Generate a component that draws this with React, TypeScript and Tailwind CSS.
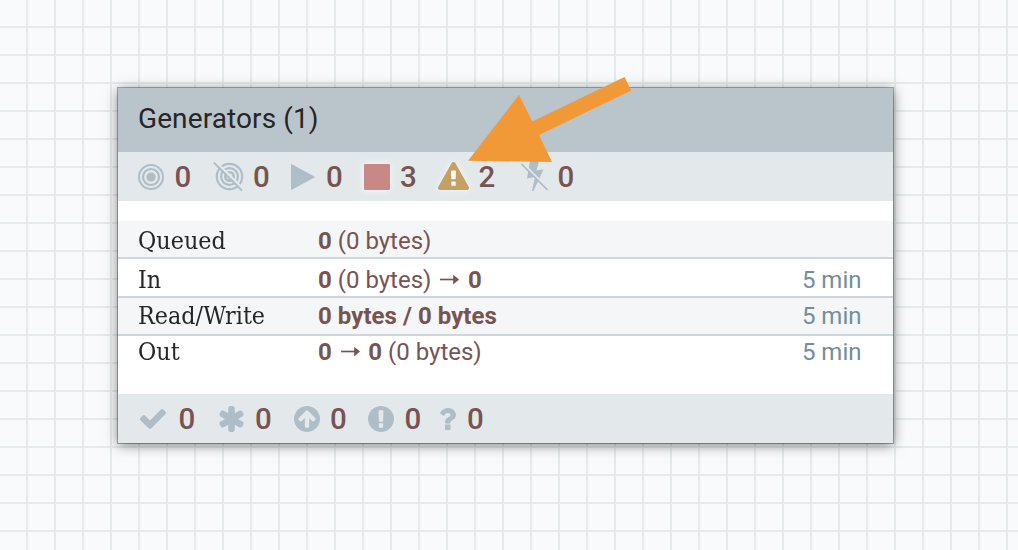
import React from "react";

const CHECK =
  "M1671 566q0 40-28 68l-724 724-136 136q-28 28-68 28t-68-28l-136-136-362-362q-28-28-28-68t28-68l136-136q28-28 68-28t68 28l294 295 656-657q28-28 68-28t68 28l136 136q28 28 28 68z";
const ASTERISK =
  "M1546 1050q46 26 59.5 77.5t-12.5 97.5l-64 110q-26 46-77.5 59.5t-97.5-12.5l-266-153v307q0 52-38 90t-90 38h-128q-52 0-90-38t-38-90v-307l-266 153q-46 26-97.5 12.5t-77.5-59.5l-64-110q-26-46-12.5-97.5t59.5-77.5l266-154-266-154q-46-26-59.5-77.5t12.5-97.5l64-110q26-46 77.5-59.5t97.5 12.5l266 153v-307q0-52 38-90t90-38h128q52 0 90 38t38 90v307l266-153q46-26 97.5-12.5t77.5 59.5l64 110q26 46 12.5 97.5t-59.5 77.5l-266 154z";
const ARROW_UP =
  "M1412 895q0-27-18-45l-362-362-91-91q-18-18-45-18t-45 18l-91 91-362 362q-18 18-18 45t18 45l91 91q18 18 45 18t45-18l189-189v502q0 26 19 45t45 19h128q26 0 45-19t19-45v-502l189 189q19 19 45 19t45-19l91-91q18-18 18-45zm252 1q0 209-103 385.5t-279.5 279.5-385.5 103-385.5-103-279.5-279.5-103-385.5 103-385.5 279.5-279.5 385.5-103 385.5 103 279.5 279.5 103 385.5z";
const EXCLAMATION =
  "M896 128q209 0 385.5 103t279.5 279.5 103 385.5-103 385.5-279.5 279.5-385.5 103-385.5-103-279.5-279.5-103-385.5 103-385.5 279.5-279.5 385.5-103zm128 1247v-190q0-14-9-23.5t-22-9.5h-192q-13 0-23 10t-10 23v190q0 13 10 23t23 10h192q13 0 22-9.5t9-23.5zm-2-344l18-621q0-12-10-18-10-8-24-8h-220q-14 0-24 8-10 6-10 18l17 621q0 10 10 17.5t24 7.5h185q14 0 23.5-7.5t10.5-17.5z";
const QUESTION =
  "M1088 1256v240q0 16-12 28t-28 12h-240q-16 0-28-12t-12-28v-240q0-16 12-28t28-12h240q16 0 28 12t12 28zm316-600q0 54-15.5 101t-35 76.5-55 59.5-57.5 43.5-61 35.5q-41 23-68.5 65t-27.5 67q0 17-12 32.5t-28 15.5h-240q-15 0-25.5-18.5t-10.5-37.5v-45q0-83 65-156.5t143-108.5q59-27 84-56t25-76q0-42-46.5-74t-107.5-32q-65 0-108 29-35 25-107 115-13 16-31 16-12 0-25-8l-164-125q-13-10-15.5-25t5.5-28q160-266 464-266 80 0 161 31t146 83 106 127.5 41 158.5z";
const WARNING =
  "M1024 1375v-190q0-14-9.5-23.5t-22.5-9.5h-192q-13 0-22.5 9.5t-9.5 23.5v190q0 14 9.5 23.5t22.5 9.5h192q13 0 22.5-9.5t9.5-23.5zm-2-374l17-459q0-12-10-19-13-11-24-11h-220q-11 0-24 11-10 7-10 21l16 457q0 10 10 16.5t24 6.5h185q14 0 23.5-6.5t10.5-16.5zm-14-934l768 1408q35 63-2 126-17 29-46.5 46t-63.5 17h-1536q-34 0-63.5-17t-46.5-46q-37-63-2-126l768-1408q17-31 47-49t65-18 65 18 47 49z";

function Stat({ className, icon, value }: { className: string; icon: React.ReactNode; value: number }) {
  return (
    <div className={`grid shrink-0 items-center ${className}`}>
      <span className="flex items-center">{icon}</span>
      <span className="pt-[2px] text-[29.5px] leading-none font-medium text-[#775351]">{value}</span>
    </div>
  );
}

function Target() {
  return (
    <svg className="h-[26px] w-[26px]" viewBox="0 0 26 26" fill="none" stroke="#aebdc6">
      <circle cx="13" cy="13" r="12" strokeWidth="2" />
      <circle cx="13" cy="13" r="8" strokeWidth="2.2" />
      <circle cx="13" cy="13" r="4.6" fill="#aebdc6" stroke="none" />
    </svg>
  );
}

function TargetOff() {
  return (
    <svg className="h-[30px] w-[31px]" viewBox="0 0 31 30" fill="none" stroke="#aebdc6">
      <circle cx="16.5" cy="14.5" r="12.7" strokeWidth="2.2" />
      <circle cx="16.5" cy="14.5" r="8.4" strokeWidth="2.2" />
      <circle cx="16.5" cy="14.5" r="4.2" strokeWidth="2.6" />
      <path d="M2.5 -0.8 L31 27.7" stroke="#e3e8eb" strokeWidth="2" />
      <path d="M0.8 0.6 L29 28.6" strokeWidth="2" />
    </svg>
  );
}

function BoltOff() {
  return (
    <svg className="h-[32px] w-[28px]" viewBox="0 0 28 32">
      <path d="M9 0 H18 L15.5 9.5 L22.5 8.2 L12.5 30 L11 30 L14 16 L6 17.4 Z" fill="#aebdc6" />
      <path d="M1.8 2.2 L28 28.4" stroke="#e3e8eb" strokeWidth="2" />
      <path d="M0.5 3 L26.5 29" stroke="#aebdc6" strokeWidth="1.7" />
    </svg>
  );
}

function Arrow() {
  return (
    <svg className="mr-2 ml-[9px] inline-block h-[11px] w-[19.5px] align-[3px]" viewBox="0 0 20 11">
      <path d="M0 5.5H15" stroke="#775351" strokeWidth="1.7" />
      <path d="M13.5 0.5L19.6 5.5L13.5 10.5Z" fill="#775351" />
    </svg>
  );
}

function Row({ className, label, time, children }: { className: string; label: React.ReactNode; time?: string; children: React.ReactNode }) {
  return (
    <div className={`flex shrink-0 pl-5 pr-[31px] text-2xl leading-7 ${className}`}>
      <div className="w-[180px]">
        <span className="inline-block origin-left scale-x-[0.93] font-['Roboto_Slab','DejaVu_Serif',serif] text-2xl leading-7 text-[#262626]">{label}</span>
      </div>
      <div className="grow whitespace-nowrap text-[#775351]">{children}</div>
      <div className="text-[#728e9b]">{time}</div>
    </div>
  );
}

export default function App() {
  return (
    <div className="relative h-[550px] w-[1018px] overflow-hidden bg-[#f9fafc] bg-[linear-gradient(to_right,transparent_26px,#e5ebeb_26px),linear-gradient(to_bottom,transparent_26px,#e5ebeb_26px)] bg-[size:28px_28px] pt-[88px] pl-[118px] font-[Roboto,sans-serif]">
      <div className="flex h-[355px] w-[774.5px] flex-col bg-white shadow-[0_0_0_1px_rgba(0,0,0,0.3),0_2px_12px_rgba(0,0,0,0.5)]">
        <div className="flex h-16 shrink-0 items-center bg-[#bac5cb] pl-5 text-[28px] leading-none text-[#262626]">
          <span className="-translate-y-px tracking-[0.1px]">Generators (1)</span>
        </div>
        <div className="flex h-[49px] shrink-0 items-center bg-[#e3e8eb] pl-5">
          <Stat className="w-[75px] grid-cols-[36.5px_1fr]" value={0} icon={<Target />} />
          <Stat className="w-[78px] grid-cols-[40px_1fr]" value={0} icon={<TargetOff />} />
          <Stat
            className="w-[72px] grid-cols-[35px_1fr]"
            value={0}
            icon={
              <svg className="h-[26px] w-6" viewBox="0 0 24 26">
                <path d="M0 0.6Q0 0 0.8 0.3L23.3 12.4Q24.3 13 23.3 13.6L0.8 25.7Q0 26 0 25.4Z" fill="#aebdc6" />
              </svg>
            }
          />
          <Stat
            className="w-[75px] grid-cols-[37px_1fr]"
            value={3}
            icon={<span className="ml-[1px] h-[26px] w-[26px] rounded-[1px] bg-[#c78886] shadow-[0_0_6px_1px_#f5f7f8]" />}
          />
          <Stat
            className="w-[83px] grid-cols-[40.5px_1fr]"
            value={2}
            icon={
              <svg className="h-[28px] w-[31px] -translate-y-px drop-shadow-[0_0_3px_#f7f8f8]" viewBox="0 0 1792 1664" preserveAspectRatio="none">
                <rect x="750" y="490" width="300" height="940" fill="#f7f8f8" />
                <path d={WARNING} fill="#c5a065" />
              </svg>
            }
          />
          <Stat className="grid-cols-[36.5px_1fr]" value={0} icon={<BoltOff />} />
        </div>

        <div className="flex grow flex-col pt-5">
          <Row className="h-[38px] border-b-2 border-[#cdd6db] bg-[#f4f6f7] pt-[6px]" label="Queued">
            <b>0</b> (0 bytes)
          </Row>
          <Row className="h-[39px] border-b-2 border-[#cdd6db] pt-[7px]" label="In" time="5 min">
            <b>0</b> (0 bytes)
            <Arrow />
            <b>0</b>
          </Row>
          <Row className="h-[38px] border-b-2 border-[#cdd6db] bg-[#f4f6f7] pt-1" label="Read/Write" time="5 min">
            <b className="tracking-[0.05px]">0 bytes / 0 bytes</b>
          </Row>
          <Row className="pt-[2px]" label="Out" time="5 min">
            <b>0</b>
            <Arrow />
            <b>0</b> (0 bytes)
          </Row>
        </div>

        <div className="flex h-[49px] shrink-0 items-center bg-[#e3e8eb] pl-[22px]">
          <Stat
            className="w-[78px] grid-cols-[38.5px_1fr]"
            value={0}
            icon={
              <svg className="h-5 w-[26px]" viewBox="121 334 1550 1188" fill="#aebdc6">
                <path d={CHECK} />
              </svg>
            }
          />
          <Stat
            className="w-[75px] grid-cols-[37px_1fr]"
            value={0}
            icon={
              <svg className="ml-[0.5px] h-[26px] w-[25px]" viewBox="158 128 1476 1536" fill="#aebdc6">
                <path d={ASTERISK} />
              </svg>
            }
          />
          <Stat
            className="w-[75px] grid-cols-[37px_1fr]"
            value={0}
            icon={
              <svg className="ml-[0.5px] h-[26px] w-[26px]" viewBox="128 128 1536 1536" fill="#aebdc6">
                <path d={ARROW_UP} />
              </svg>
            }
          />
          <Stat
            className="w-[72px] grid-cols-[36.5px_1fr]"
            value={0}
            icon={
              <svg className="h-[26px] w-[26px]" viewBox="128 128 1536 1536" fill="#aebdc6">
                <path d={EXCLAMATION} />
              </svg>
            }
          />
          <Stat
            className="grid-cols-[27px_1fr]"
            value={0}
            icon={
              <svg className="h-[22px] w-4" viewBox="480 256 924 1280" fill="#aebdc6">
                <path d={QUESTION} />
              </svg>
            }
          />
        </div>
      </div>

      <svg className="absolute top-[70px] left-[460px] h-[100px] w-[180px]" viewBox="460 70 180 100">
        <path d="M468 160.8L519 94.8L532.3 121.5L624.5 77L631.2 90.5L539 135L552 162Z" fill="#f19937" />
      </svg>
    </div>
  );
}
